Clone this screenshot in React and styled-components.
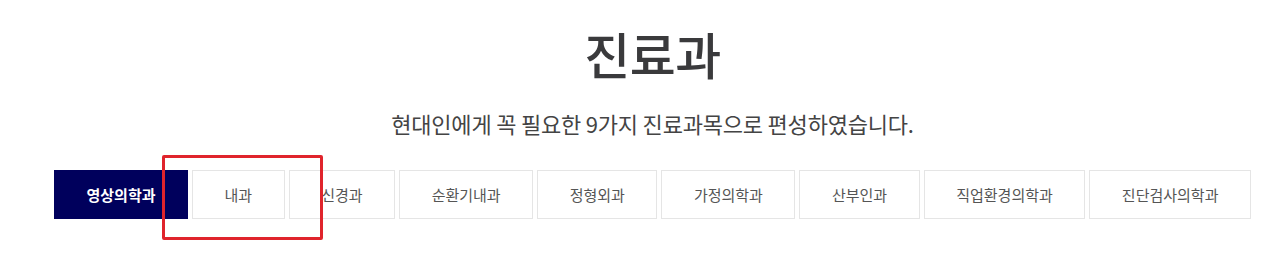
import React from "react";
import styled, { createGlobalStyle } from "styled-components";

const Global = createGlobalStyle`
  html, body { margin: 0; padding: 0; background: #fff; }
  body { font-family: "Noto Sans CJK KR", "Noto Sans", sans-serif; }
`;

const Page = styled.div`
  min-height: 274px;
  background: #fff;
`;

const Section = styled.section`
  position: relative;
  width: 1197px;
  margin-left: 54px;
  padding-top: 28px;
`;

const Title = styled.h2`
  margin: 0;
  font-size: 50px;
  line-height: 50px;
  font-weight: 500;
  color: #3a3a3c;
  text-align: center;
  letter-spacing: -0.5px;
`;

const Subtitle = styled.p`
  margin: 34px 0 0;
  font-size: 22px;
  line-height: 22px;
  font-weight: 400;
  color: #444;
  text-align: center;
  letter-spacing: -0.2px;
`;

const Tabs = styled.ul`
  list-style: none;
  margin: 36px 0 0;
  padding: 0;
  display: flex;
  gap: 4px;
`;

const Tab = styled.li`
  flex: 1 1 auto;
  box-sizing: border-box;
  height: 49px;
  padding: 0 31px;
  display: flex;
  align-items: center;
  justify-content: center;
  white-space: nowrap;
  font-size: 15px;
  font-weight: ${(p) => (p.$active ? 700 : 400)};
  color: ${(p) => (p.$active ? "#fff" : "#555")};
  background: ${(p) => (p.$active ? "#00005c" : "#fff")};
  border: 1px solid ${(p) => (p.$active ? "#00005c" : "#e5e5e5")};
`;

const Highlight = styled.div`
  position: absolute;
  left: 108px;
  top: 155px;
  width: 161px;
  height: 85px;
  box-sizing: border-box;
  border: 3px solid #e0242c;
  border-radius: 2px;
  pointer-events: none;
`;

const items = [
  "영상의학과",
  "내과",
  "신경과",
  "순환기내과",
  "정형외과",
  "가정의학과",
  "산부인과",
  "직업환경의학과",
  "진단검사의학과",
];

export default function App() {
  return (
    <Page>
      <Global />
      <Section>
        <Title>진료과</Title>
        <Subtitle>현대인에게 꼭 필요한 9가지 진료과목으로 편성하였습니다.</Subtitle>
        <Tabs>
          {items.map((t, i) => (
            <Tab key={t} $active={i === 0}>
              {t}
            </Tab>
          ))}
        </Tabs>
        <Highlight />
      </Section>
    </Page>
  );
}
